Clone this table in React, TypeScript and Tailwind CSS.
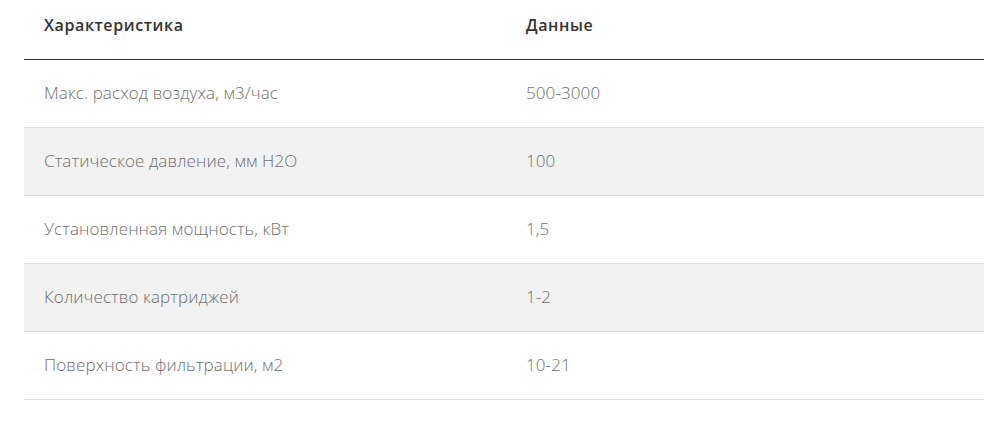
import React from "react";

const rows = [
  { name: "Макс. расход воздуха, м3/час", value: "500-3000" },
  { name: "Статическое давление, мм H2O", value: "100" },
  { name: "Установленная мощность, кВт", value: "1,5" },
  { name: "Количество картриджей", value: "1-2" },
  { name: "Поверхность фильтрации, м2", value: "10-21" },
];

const App = () => {
  return (
    <div className="w-[1008px] h-[442px] bg-white px-6 font-['Open_Sans','Noto_Sans',sans-serif]">
      <table className="w-[960px] border-collapse">
        <thead>
          <tr className="border-b border-[#333]">
            <th className="w-[482px] h-[59px] pl-5 pb-[8px] text-left text-[16px] font-semibold tracking-[0.6px] text-[#333]">Характеристика</th>
            <th className="h-[59px] pl-5 pb-[8px] text-left text-[16px] font-semibold tracking-[0.6px] text-[#333]">Данные</th>
          </tr>
        </thead>
        <tbody>
          {rows.map((row, i) => (
            <tr key={row.name} className={`border-b border-[#dcdcdc] ${i % 2 === 1 ? "bg-[#f2f2f2]" : "bg-white"}`}>
              <td className="h-[68px] pl-5 text-[17px] font-light tracking-[0.1px] text-[#707070]">{row.name}</td>
              <td className="h-[68px] pl-5 text-[17px] font-light tracking-[0.1px] text-[#707070]">{row.value}</td>
            </tr>
          ))}
        </tbody>
      </table>
    </div>
  );
};

export default App;
